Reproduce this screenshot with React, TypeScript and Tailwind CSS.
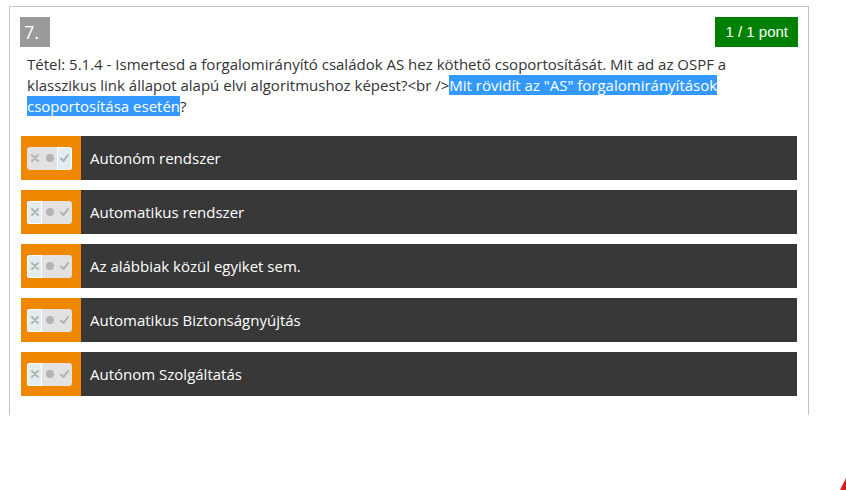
import React from "react";

type Choice = "x" | "dot" | "check";

interface Option {
  label: string;
  state: Choice;
}

const options: Option[] = [
  { label: "Autonóm rendszer", state: "check" },
  { label: "Automatikus rendszer", state: "x" },
  { label: "Az alábbiak közül egyiket sem.", state: "x" },
  { label: "Automatikus Biztonságnyújtás", state: "x" },
  { label: "Autónom Szolgáltatás", state: "x" },
];

const Segment: React.FC<{ active: boolean; children: React.ReactNode }> = ({ active, children }) => (
  <div
    className={
      active
        ? "w-[15px] h-full flex items-center justify-center border border-white bg-[#e3edf0]"
        : "w-[15px] h-full flex items-center justify-center border border-transparent"
    }
  >
    {children}
  </div>
);

const Toggle: React.FC<{ state: Choice }> = ({ state }) => (
  <div className="flex h-[23px] w-[45px] rounded-[3px] bg-[#e2e2e2] overflow-hidden">
    <Segment active={state === "x"}>
      <svg width="8" height="8" viewBox="0 0 8 8">
        <path d="M1 1 L7 7 M7 1 L1 7" stroke="#b4b4b4" strokeWidth="2" strokeLinecap="round" />
      </svg>
    </Segment>
    <Segment active={state === "dot"}>
      <div className="w-[8px] h-[8px] rounded-full bg-[#b4b4b4]" />
    </Segment>
    <Segment active={state === "check"}>
      <svg width="9" height="8" viewBox="0 0 9 8">
        <path d="M1 4.5 L3.5 7 L8 1" fill="none" stroke="#b0b0b0" strokeWidth="2" strokeLinecap="round" />
      </svg>
    </Segment>
  </div>
);

export default function App() {
  return (
    <div className="relative w-[846px] h-[490px] bg-white overflow-hidden" style={{ fontFamily: "'Open Sans', sans-serif" }}>
      <div className="ml-[9px] mt-[6px] w-[800px] h-[409px] border-t border-x border-[#c4c4c4] pt-[10px] px-[10px]">
        <div className="flex items-start justify-between">
          <div className="w-[30px] h-[30px] bg-[#9a9a9a] text-white text-[18px] leading-[30px] pl-[4px]">7.</div>
          <div
            className="h-[30px] px-[10px] bg-[#008000] text-white text-[15px] leading-[30px]"
            style={{ fontFamily: "'Liberation Sans', Arial, sans-serif" }}
          >
            1 / 1 pont
          </div>
        </div>
        <p className="mt-[7px] pl-[7px] pr-[30px] text-[15px] leading-[21px] text-[#333]">
          Tétel: 5.1.4 - Ismertesd a forgalomirányító családok AS hez köthető csoportosítását. Mit ad az OSPF a
          klasszikus link állapot alapú elvi algoritmushoz képest?&lt;br /&gt;
          <span className="bg-[#3399ff] text-white">Mit rövidít az "AS" forgalomirányítások csoportosítása esetén</span>?
        </p>
        <div className="mt-[19px] ml-[1px] mr-[1px] flex flex-col gap-[10px]">
          {options.map((o) => (
            <div key={o.label} className="flex h-[44px]">
              <div className="w-[60px] bg-[#f08700] flex items-center pl-[6px]">
                <Toggle state={o.state} />
              </div>
              <div className="flex-1 bg-[#383838] flex items-center pl-[9px] text-white text-[15px]">
                {o.label}
              </div>
            </div>
          ))}
        </div>
      </div>
      <svg className="absolute right-0 bottom-0" width="8" height="16" viewBox="0 0 8 16">
        <path d="M2 16 L8 4 L8 16 Z" fill="#d81e1e" />
      </svg>
    </div>
  );
}
